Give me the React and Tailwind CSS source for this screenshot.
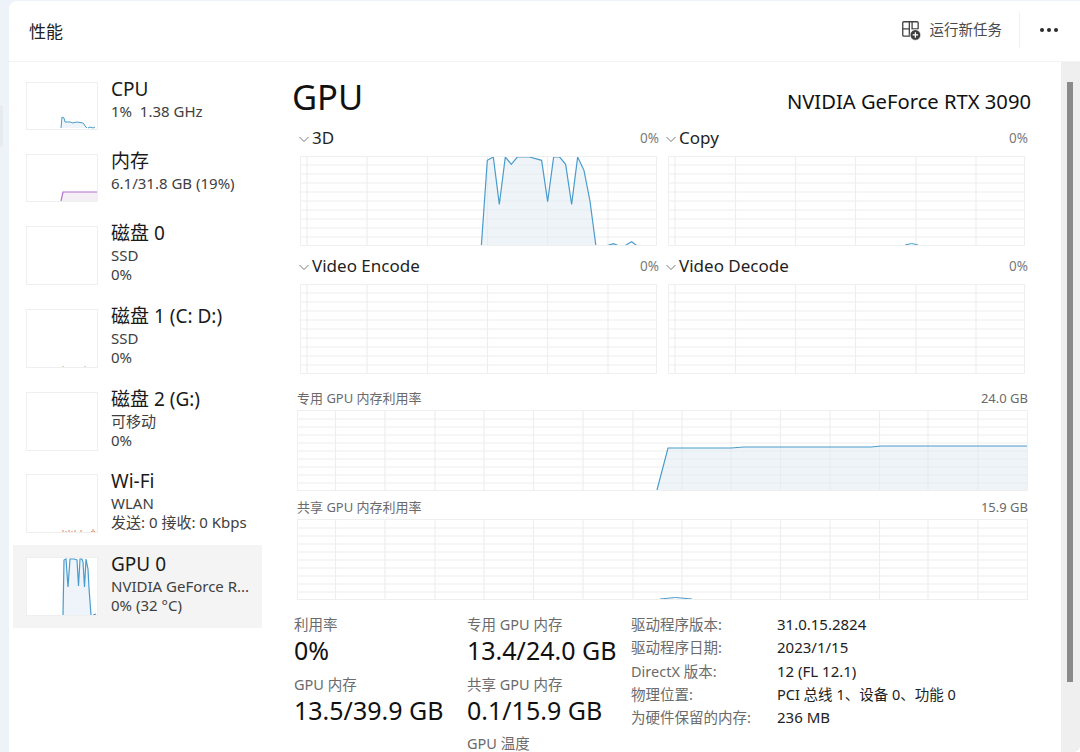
const FONT = '"Noto Sans", "Noto Sans CJK SC", sans-serif';

function Spark({ w = 72, h, children }) {
  return (
    <div className="shrink-0 border border-[#efefef] bg-white" style={{ width: w, height: h }}>
      <svg width={w - 2} height={h - 2} viewBox={`0 0 ${w - 2} ${h - 2}`} className="block">{children}</svg>
    </div>
  );
}

function SideItem({ title, lines, h, thumbH, selected, children }) {
  return (
    <div className={`flex gap-[13px] ml-[4px] w-[249px] pl-[13px] pt-[12px] ${selected ? 'bg-[#f4f4f4]' : ''}`} style={{ height: h }}>
      <Spark h={thumbH}>{children}</Spark>
      <div className="-mt-[5px] min-w-0">
        <div className="text-[19px] leading-[24px] text-[#1a1a1a] whitespace-pre">{title}</div>
        {lines.map((l, i) => (
          <div key={i} className={`text-[15px] leading-[19px] text-[#404040] whitespace-pre ${i === 0 ? 'mt-[1px]' : ''}`}>{l}</div>
        ))}
      </div>
    </div>
  );
}

function Grid({ w, h, vs, hs }) {
  return (
    <g stroke="#eeeeee" strokeWidth="1.2">
      {vs.map((x) => <line key={`v${x}`} x1={x} y1="0" x2={x} y2={h} />)}
      {hs.map((y) => <line key={`h${y}`} x1="0" y1={y} x2={w} y2={y} />)}
    </g>
  );
}

function Chart({ w, h, vs, hs, children, className = '' }) {
  return (
    <div className={`border border-[#efefef] bg-white ${className}`} style={{ width: w, height: h }}>
      <svg width={w - 2} height={h - 2} viewBox={`0 0 ${w - 2} ${h - 2}`} className="block">
        <Grid w={w - 2} h={h - 2} vs={vs} hs={hs} />
        {children}
      </svg>
    </div>
  );
}

const VS_A = [6, 66, 126.5, 186.5, 246.5, 307];
const VS_B = [6, 66.5, 126.5, 186.5, 247, 307];
const HS_A = [8, 17, 26, 35, 44, 53, 62, 71, 80];
const VS_M = [37.5, 87, 137, 186, 235.5, 285, 335, 384, 433, 482.5, 532, 581.5, 630, 680];
const HS_M = [8, 16, 24, 32, 40, 48, 56, 64, 72];

function EngineHead({ name, pct, wide }) {
  return (
    <div className="h-[24px] flex items-center justify-between" style={{ width: wide }}>
      <div className="flex items-center">
        <svg width="12" height="12" viewBox="0 0 12 12" className="mr-[2px] mt-[1px]">
          <path d="M1.5 4 L6 8.5 L10.5 4" fill="none" stroke="#7a7a7a" strokeWidth="1" />
        </svg>
        <span className="text-[17px] text-[#1f1f1f] leading-[24px]">{name}</span>
      </div>
      <span className="text-[13.500px] text-[#7a7a7a] mr-[1px]">{pct}</span>
    </div>
  );
}

function Stat({ label, value, className = '' }) {
  return (
    <div className={className}>
      <div className="text-[14.500px] leading-[19px] text-[#6b6b6b] whitespace-nowrap">{label}</div>
      <div className="text-[25px] leading-[33px] text-[#111] whitespace-nowrap">{value}</div>
    </div>
  );
}

const info = [
  ['驱动程序版本:', '31.0.15.2824', 'text-[15px]'],
  ['驱动程序日期:', '2023/1/15', 'text-[15px]'],
  ['DirectX 版本:', '12 (FL 12.1)', 'text-[15px]'],
  ['物理位置:', 'PCI 总线 1、设备 0、功能 0', 'text-[14.500px]'],
  ['为硬件保留的内存:', '236 MB', 'text-[15px]'],
];

export default function App() {
  return (
    <div className="relative w-[1080px] h-[752px] overflow-hidden bg-[#edf3f8] pl-[9px] pt-[1px] flex" style={{ fontFamily: FONT }}>
      <div className="absolute left-0 top-[105px] w-[3px] h-[42px] bg-[#e6ebf0] rounded-r" />
      <div className="flex-1 bg-white rounded-tl-lg flex flex-col min-w-0">
        {/* header */}
        <div className="h-[61px] shrink-0 flex items-center justify-between border-b border-[#f3f3f3] pl-[20px]">
          <span className="text-[17px] text-[#222] mt-[2px]">性能</span>
          <div className="flex items-center -mt-[3px]">
            <svg width="22" height="22" viewBox="0 0 20 20" className="mr-[8px]">
              <path d="M8.5 2.5H3.5a1 1 0 0 0-1 1V9h6V2.5ZM8.5 9v6.500H3.500a1 1 0 0 1-1-1V9M8.500 2.500h7a1 1 0 0 1 1 1V9M11 2.500V9h5.500" fill="none" stroke="#444" strokeWidth="1.2" />
              <circle cx="14" cy="14.500" r="4.800" fill="#3c3c3c" stroke="#fff" strokeWidth="0.6" />
              <path d="M14 12v5M11.500 14.500h5" stroke="#fff" strokeWidth="1.2" />
            </svg>
            <span className="text-[14.500px] text-[#4a4a4a]">运行新任务</span>
            <div className="w-px h-[36px] bg-[#f0f0f0] ml-[17px] mr-[20px]" />
            <div className="flex gap-[3px] w-[20px] mr-[20px]">
              <span className="w-[4px] h-[4px] rounded-full bg-[#2b2b2b]" />
              <span className="w-[4px] h-[4px] rounded-full bg-[#2b2b2b]" />
              <span className="w-[4px] h-[4px] rounded-full bg-[#2b2b2b]" />
            </div>
          </div>
        </div>

        <div className="flex-1 flex min-h-0">
          {/* sidebar */}
          <div className="w-[253px] shrink-0 pt-[8px]">
            <SideItem title="CPU" lines={['1%  1.38 GHz']} h={72} thumbH={48}>
              <path d="M34 45 L35 34 L37 35 L38 39 L44 39 L45 40 L50 39 L56 40 L57 41 L58 43 L60 45Z" fill="#eef4f9" />
              <path d="M34 45 L35 34 L37 35 L38 39 L44 39 L45 40 L50 39 L56 40 L57 41 L58 43 L60 45 M61 45 L63 44 L66 45 L68 44" fill="none" stroke="#4a9ccc" strokeWidth="1" />
            </SideItem>
            <SideItem title="内存" lines={['6.1/31.8 GB (19%)']} h={72} thumbH={48}>
              <path d="M34 46 L36 37 L70 37 L70 46Z" fill="#f3eff4" />
              <path d="M34 46 L36 37 L70 37" fill="none" stroke="#b96fd0" strokeWidth="1.2" />
            </SideItem>
            <SideItem title="磁盘 0" lines={['SSD', '0%']} h={83} thumbH={59} />
            <SideItem title="磁盘 1 (C: D:)" lines={['SSD', '0%']} h={83} thumbH={59}>
              <path d="M36 57v-1M58 57v-1" stroke="#b7d9a0" strokeWidth="1.5" />
            </SideItem>
            <SideItem title="磁盘 2 (G:)" lines={['可移动', '0%']} h={82} thumbH={59} />
            <SideItem title="Wi-Fi" lines={['WLAN', '发送: 0 接收: 0 Kbps']} h={83} thumbH={59}>
              <path d="M36 57v-2M39 57v-1M42 57v-2M45 57v-1M48 57v-2M54 57v-2M66 57v-3M64.500 57v-1M67.500 57v-1" stroke="#ec9a78" strokeWidth="1.2" />
            </SideItem>
            <SideItem title="GPU 0" lines={['NVIDIA GeForce R...', '0% (32 °C)']} h={83} thumbH={59} selected>
              <path d="M36 57 L37 2 L39 1 L41 29 L43 1 L47 1 L50 2 L51.500 28 L53 1 L55 1 L56 4 L57.500 29 L59 1 L61 11 L62 30 L64 57Z" fill="#eef4f9" />
              <path d="M36 57 L37 2 L39 1 L41 29 L43 1 L47 1 L50 2 L51.500 28 L53 1 L55 1 L56 4 L57.500 29 L59 1 L61 11 L62 30 L64 57 M66 57 L69 56" fill="none" stroke="#4a9ccc" strokeWidth="1.2" />
            </SideItem>
          </div>

          {/* content */}
          <div className="flex-1 min-w-0 pl-[30px] overflow-hidden">
            <div className="h-[46px] mt-[12px] flex items-center justify-between w-[739px]">
              <span className="text-[34.500px] leading-[46px] text-[#111]">GPU</span>
              <span className="text-[20.200px] leading-[26px] text-[#111] mt-[7px] whitespace-nowrap">NVIDIA GeForce RTX 3090</span>
            </div>

            <div className="ml-[6px] mt-[6px] grid grid-cols-[367px_364px]">
              <div>
                <EngineHead name="3D" pct="0%" wide={362} />
                <Chart w={357} h={90} vs={VS_A} hs={HS_A} className="mt-[6px] ml-[2px]">
                  <g transform="translate(-1 0) scale(0.3333)">
                    <path d="M604 376 L622 118 L640 108 L658 250 L676 108 L694 130 L712 108 L748 108 L785 118 L803 242 L821 108 L839 108 L857 130 L875 250 L893 108 L912 148 L930 240 L948 376 Z" fill="#dfe9f2" fillOpacity="0.5" transform="translate(-60 -108)" />
                    <path d="M604 376 L622 118 L640 108 L658 250 L676 108 L694 130 L712 108 L748 108 L785 118 L803 242 L821 108 L839 108 L857 130 L875 250 L893 108 L912 148 L930 240 L948 376 M975 376 L1000 368 L1015 374 L1035 374 L1055 362 L1073 376" fill="none" stroke="#4a9ccc" strokeWidth="3.6" transform="translate(-60 -108)" />
                  </g>
                </Chart>
              </div>
              <div>
                <EngineHead name="Copy" pct="0%" wide={364} />
                <Chart w={357} h={90} vs={VS_B} hs={HS_A} className="mt-[6px] ml-[3px]">
                  <path d="M236 88 Q243 85 249 88" fill="none" stroke="#4a9ccc" strokeWidth="1" />
                </Chart>
              </div>
              <div className="mt-[8px]">
                <EngineHead name="Video Encode" pct="0%" wide={362} />
                <Chart w={357} h={90} vs={VS_A} hs={HS_A} className="mt-[6px] ml-[2px]" />
              </div>
              <div className="mt-[8px]">
                <EngineHead name="Video Decode" pct="0%" wide={364} />
                <Chart w={357} h={90} vs={VS_B} hs={HS_A} className="mt-[6px] ml-[3px]" />
              </div>
            </div>

            <div className="ml-[5px] w-[731px] mt-[17px]">
              <div className="h-[16px] flex items-center justify-between text-[13px] text-[#6b6b6b]">
                <span>专用 GPU 内存利用率</span><span>24.0 GB</span>
              </div>
              <Chart w={731} h={81} vs={VS_M} hs={HS_M} className="mt-[3px]">
                <path d="M359 79 L370 37 L433 37 L446 36 L573 36 L583 35 L729 35 L729 79Z" fill="#dfe9f2" fillOpacity="0.5" />
                <path d="M359 79 L370 37 L433 37 L446 36 L573 36 L583 35 L729 35" fill="none" stroke="#4a9ccc" strokeWidth="1.2" />
              </Chart>
              <div className="h-[16px] mt-[9px] flex items-center justify-between text-[13px] text-[#6b6b6b]">
                <span>共享 GPU 内存利用率</span><span>15.9 GB</span>
              </div>
              <Chart w={731} h={81} vs={VS_M} hs={HS_M} className="mt-[3px]">
                <path d="M362 79 Q377 76 394 79" fill="none" stroke="#4a9ccc" strokeWidth="1" />
              </Chart>
            </div>

            <div className="flex ml-[2px] mt-[15px]">
              <div className="w-[173px] shrink-0">
                <Stat label="利用率" value="0%" />
                <Stat label="GPU 内存" value="13.5/39.9 GB" className="mt-[8px]" />
              </div>
              <div className="w-[164px] shrink-0">
                <Stat label="专用 GPU 内存" value="13.4/24.0 GB" />
                <Stat label="共享 GPU 内存" value="0.1/15.9 GB" className="mt-[8px]" />
                <div className="text-[14.500px] leading-[19px] text-[#6b6b6b] mt-[7px]">GPU 温度</div>
              </div>
              <div>
                {info.map(([k, v, size]) => (
                  <div key={k} className="flex h-[23.250px] items-start leading-[19px]">
                    <span className="w-[146px] text-[14.500px] text-[#6b6b6b] whitespace-nowrap">{k}</span>
                    <span className={`${size} text-[#222] whitespace-nowrap`}>{v}</span>
                  </div>
                ))}
              </div>
            </div>
          </div>

          {/* scrollbar */}
          <div className="w-[19px] shrink-0 bg-[#efefef] pt-[20px] pl-[6px] rounded-br-md">
            <div className="w-[6px] h-[600px] bg-[#8a8a8a]" />
          </div>
        </div>
      </div>
    </div>
  );
}
